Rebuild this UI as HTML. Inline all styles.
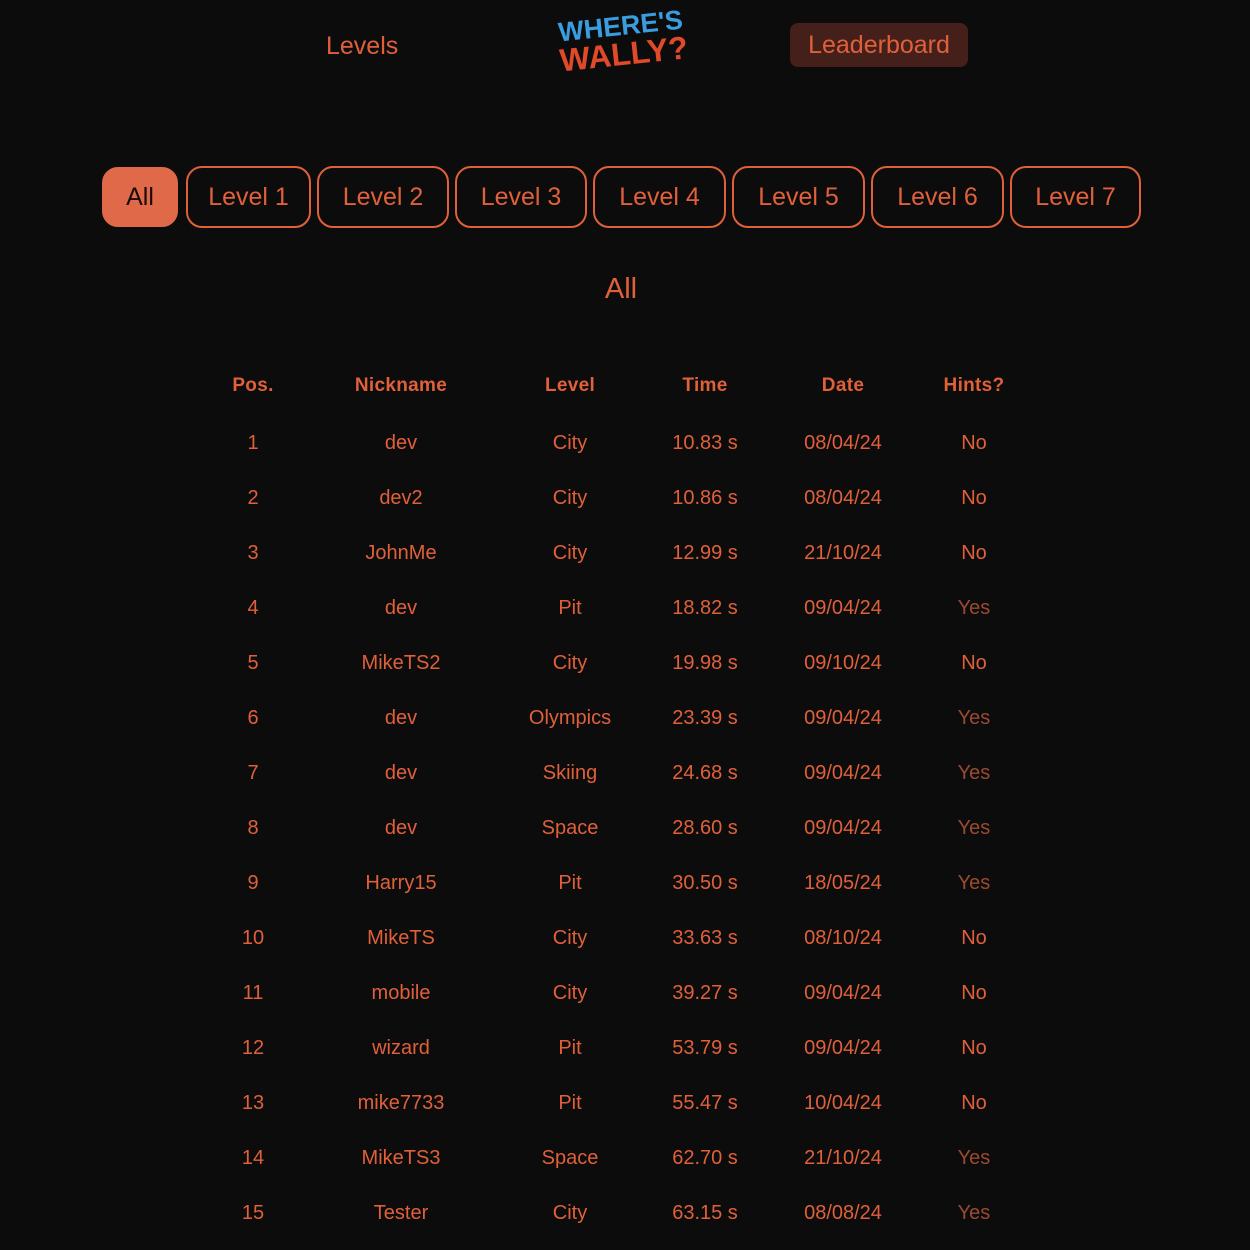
<!DOCTYPE html>
<html><head><meta charset="utf-8"><style>
body{margin:0;background:#0c0c0c;width:1250px;height:1250px;overflow:hidden;font-family:"Liberation Sans",sans-serif;color:#e0603a;position:relative}
.a{position:absolute}
.nav{font-size:25px;color:#e0603a}
.btn{position:absolute;top:166px;height:58px;border:2px solid #e0603a;border-radius:16px;box-sizing:content-box;display:flex;align-items:center;justify-content:center;font-size:25px;color:#e0603a}
.c{position:absolute;transform:translateX(-50%);white-space:nowrap;font-size:20px}
.h{font-weight:bold;font-size:19px;letter-spacing:0.3px}
.y{color:#9a4a30}
</style></head><body>
<div class="a nav" style="left:326px;top:32px">Levels</div>
<div class="a" style="left:558px;top:12px;width:128px;transform:rotate(-6deg);transform-origin:center center;font-weight:900;line-height:28px;text-align:center">
<div style="color:#3a9de0;font-size:27px">WHERE'S</div>
<div style="color:#e04a2a;font-size:32px">WALLY?</div></div>
<div class="a" style="left:790px;top:23px;width:178px;height:44px;background:#45201a;border-radius:8px;display:flex;align-items:center;justify-content:center;font-size:25px;color:#e0603a">Leaderboard</div>
<div class="btn" style="left:102px;width:72px;background:#e0694a;color:#1a0c08;border-color:#e0694a;top:167px;height:56px">All</div>
<div class="btn" style="left:186px;width:121px">Level 1</div>
<div class="btn" style="left:317px;width:128px">Level 2</div>
<div class="btn" style="left:455px;width:128px">Level 3</div>
<div class="btn" style="left:593px;width:129px">Level 4</div>
<div class="btn" style="left:732px;width:129px">Level 5</div>
<div class="btn" style="left:871px;width:129px">Level 6</div>
<div class="btn" style="left:1010px;width:127px">Level 7</div>
<div class="c" style="left:621px;top:273px;font-size:29px">All</div>
<div id="t"></div>
<script>
const xs=[253,401,570,705,843,974];
const hd=["Pos.","Nickname","Level","Time","Date","Hints?"];
const rows=[["dev","City","10.83 s","08/04/24","No"],["dev2","City","10.86 s","08/04/24","No"],["JohnMe","City","12.99 s","21/10/24","No"],["dev","Pit","18.82 s","09/04/24","Yes"],["MikeTS2","City","19.98 s","09/10/24","No"],["dev","Olympics","23.39 s","09/04/24","Yes"],["dev","Skiing","24.68 s","09/04/24","Yes"],["dev","Space","28.60 s","09/04/24","Yes"],["Harry15","Pit","30.50 s","18/05/24","Yes"],["MikeTS","City","33.63 s","08/10/24","No"],["mobile","City","39.27 s","09/04/24","No"],["wizard","Pit","53.79 s","09/04/24","No"],["mike7733","Pit","55.47 s","10/04/24","No"],["MikeTS3","Space","62.70 s","21/10/24","Yes"],["Tester","City","63.15 s","08/08/24","Yes"]];
let h="";
hd.forEach((t,i)=>h+=`<div class="c h" style="left:${xs[i]}px;top:375px">${t}</div>`);
rows.forEach((r,j)=>{const v=[j+1,...r];v.forEach((t,i)=>h+=`<div class="c${t==="Yes"?" y":""}" style="left:${xs[i]}px;top:${432+55*j}px">${t}</div>`)});
document.getElementById("t").innerHTML=h;
</script>
</body></html>
